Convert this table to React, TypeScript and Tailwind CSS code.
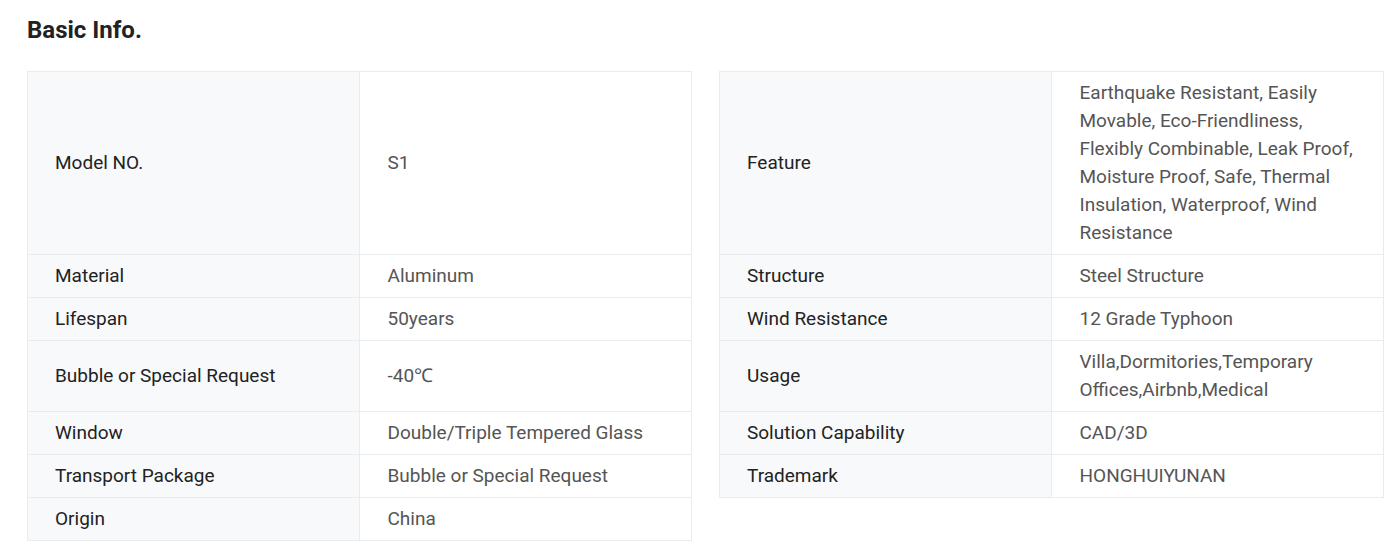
const rows: [string, string][][] = [
  [
    ['Model NO.', 'S1'],
    [
      'Feature',
      'Earthquake Resistant, Easily Movable, Eco-Friendliness, Flexibly Combinable, Leak Proof, Moisture Proof, Safe, Thermal Insulation, Waterproof, Wind Resistance',
    ],
  ],
  [
    ['Material', 'Aluminum'],
    ['Structure', 'Steel Structure'],
  ],
  [
    ['Lifespan', '50years'],
    ['Wind Resistance', '12 Grade Typhoon'],
  ],
  [
    ['Bubble or Special Request', '-40℃'],
    ['Usage', 'Villa,Dormitories,Temporary Offices,Airbnb,Medical'],
  ],
  [
    ['Window', 'Double/Triple Tempered Glass'],
    ['Solution Capability', 'CAD/3D'],
  ],
  [
    ['Transport Package', 'Bubble or Special Request'],
    ['Trademark', 'HONGHUIYUNAN'],
  ],
  [['Origin', 'China']],
]

function Cell({ label, value, first }: { label: string; value: string; first: boolean }) {
  return (
    <div
      className={`grid grid-cols-2 border-x border-b border-[#e8ebf0] ${first ? 'border-t' : ''}`}
    >
      <div className="flex items-center bg-[#f8f9fb] border-r border-[#e8ebf0] pl-[27px] pr-6 py-[7px] text-[#222] leading-[28px]">
        {label}
      </div>
      <div className="flex items-center bg-white pl-[28px] pr-6 py-[7px] text-[#555] leading-[28px]">
        {value}
      </div>
    </div>
  )
}

export default function App() {
  return (
    <div className="bg-white min-h-[555px] px-[27px] pt-[14px] font-['Roboto',sans-serif] text-[19px]">
      <h2 className="text-[24px] font-bold text-[#222] leading-[32px] mb-[25px]">Basic Info.</h2>
      <div className="grid grid-cols-2 gap-x-[27px] w-[1357px]">
        {rows.map((row, i) =>
          [0, 1].map((j) =>
            row[j] ? (
              <Cell key={`${i}-${j}`} label={row[j][0]} value={row[j][1]} first={i === 0} />
            ) : (
              <div key={`${i}-${j}`} />
            ),
          ),
        )}
      </div>
    </div>
  )
}
